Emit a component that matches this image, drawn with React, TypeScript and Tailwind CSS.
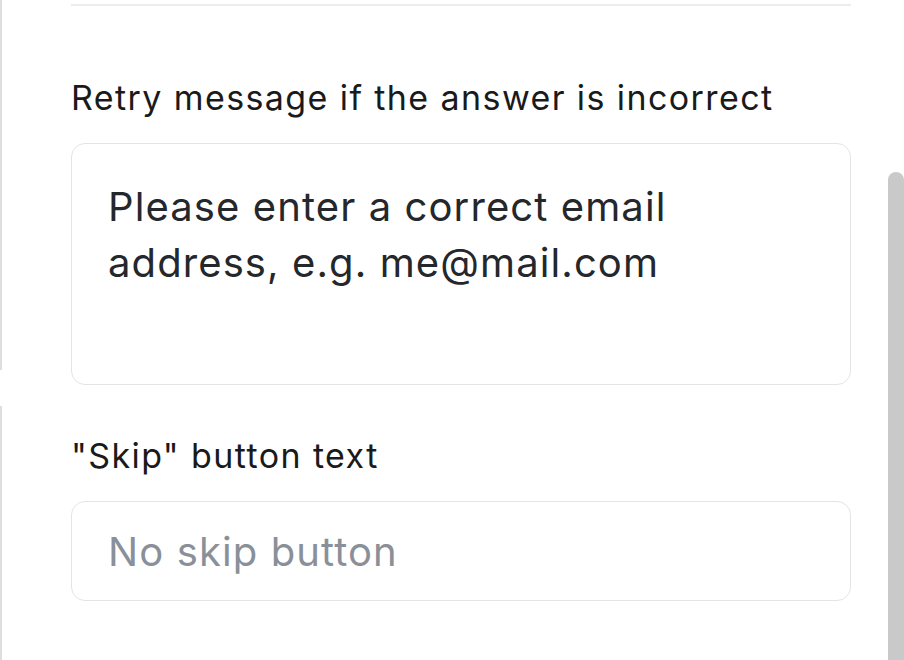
export default function App() {
  return (
    <div className="flex h-[660px] w-[904px] overflow-hidden bg-white font-['Inter',sans-serif]">
      {/* left edge of the panel */}
      <div className="flex w-[2px] flex-col">
        <div className="h-[370px] bg-[#dedede]" />
        <div className="h-[36px]" />
        <div className="flex-1 bg-[#dedede]" />
      </div>

      {/* form */}
      <div className="flex flex-1 flex-col pl-[69px] pr-[37px]">
        <div className="mt-[4px] h-[2px] bg-[#ececec]" />

        <label className="mt-[72px] text-[34px] leading-[40px] tracking-[1.4px] text-[#1a1a1a]">
          Retry message if the answer is incorrect
        </label>
        <div className="mt-[25px] h-[242px] rounded-[14px] border border-[#e4e4e4] pl-[36px] pr-[36px] pt-[35px] text-[40px] leading-[56px] tracking-[1.1px] text-[#24272b]">
          Please enter a correct email address, e.g. me@mail.com
        </div>

        <label className="mt-[51px] text-[34px] leading-[40px] tracking-[1.4px] text-[#1a1a1a]">
          "Skip" button text
        </label>
        <input
          className="mt-[25px] h-[100px] rounded-[14px] border border-[#e4e4e4] px-[36px] text-[40px] leading-[56px] tracking-[1.1px] text-[#24272b] outline-none placeholder:text-[#8a9099]"
          placeholder="No skip button"
        />
      </div>

      {/* scrollbar */}
      <div className="flex w-[16px] flex-col pt-[172px]">
        <div className="flex-1 rounded-t-[8px] bg-[#c9c9c9]" />
      </div>
    </div>
  );
}
